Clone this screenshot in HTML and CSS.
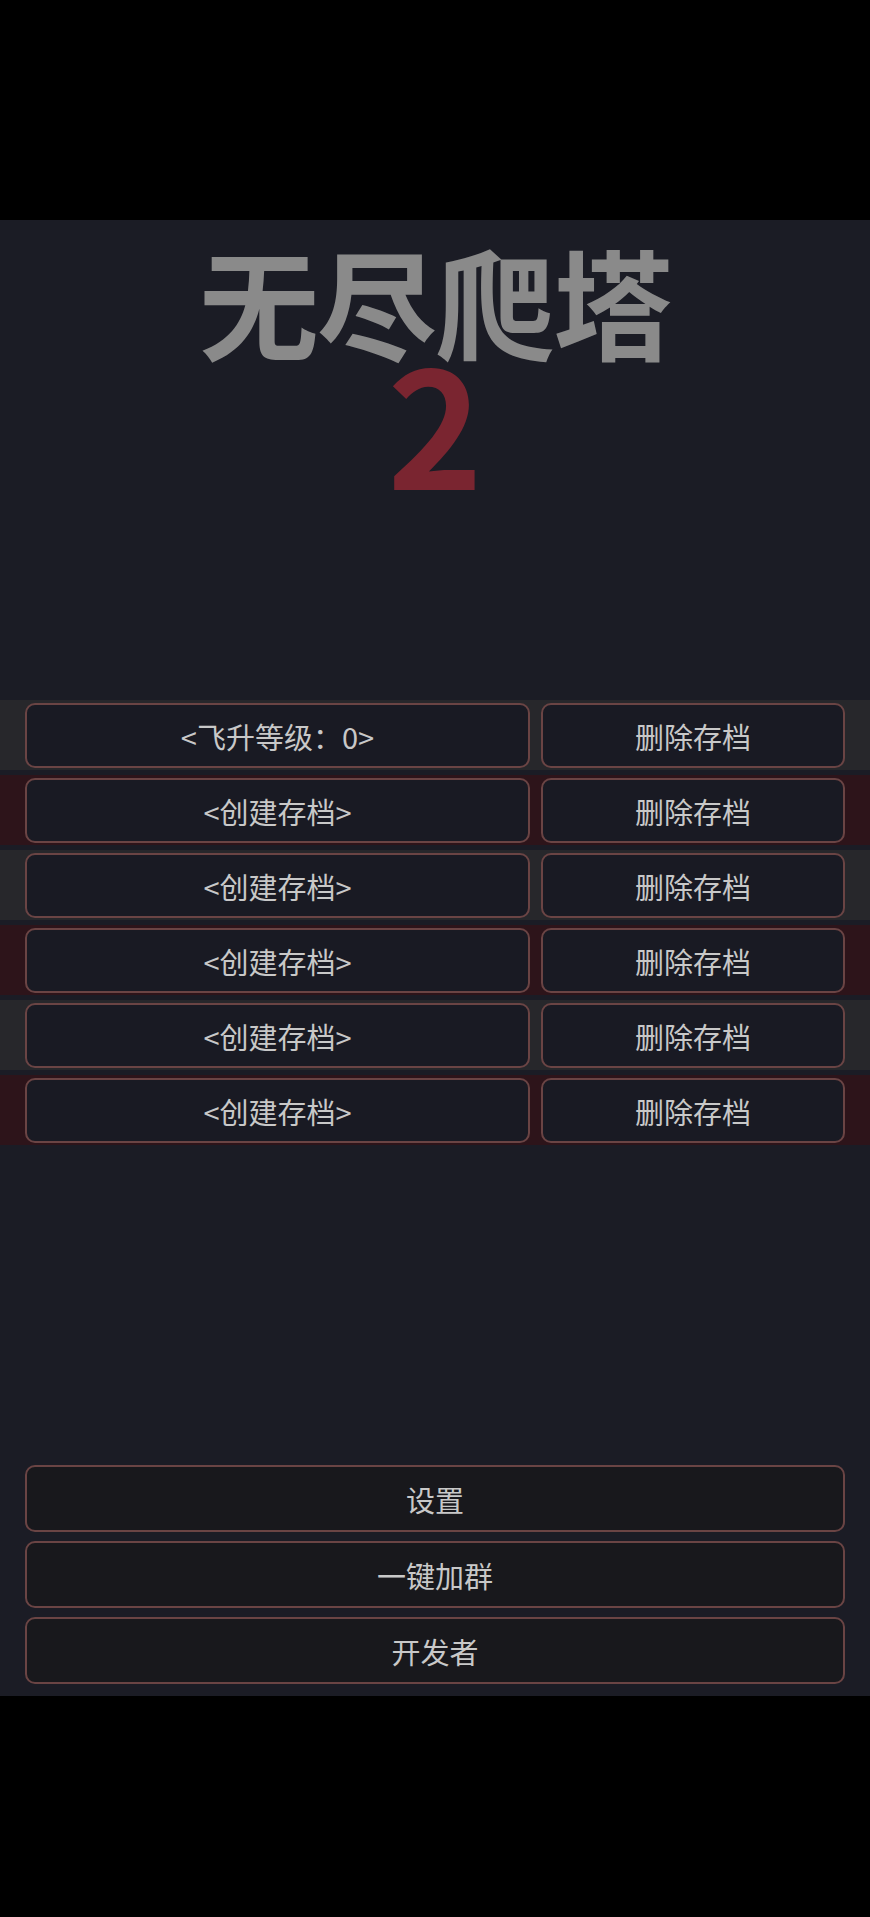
FILE: index.html
```html
<!DOCTYPE html>
<html lang="zh-CN">
<head>
<meta charset="utf-8">
<title>无尽爬塔2</title>
<link rel="stylesheet" href="styles.css">
</head>
<body>
<div class="screen">
  <div class="top-bar"></div>
  <main class="app">
    <header class="title">
      <div class="title-main">无尽爬塔</div>
      <div class="title-num">2</div>
    </header>
    <section class="rows">
      <div class="row gray"><div class="btn slot">&lt;飞升等级：0&gt;</div><div class="btn del">删除存档</div></div>
      <div class="row red"><div class="btn slot">&lt;创建存档&gt;</div><div class="btn del">删除存档</div></div>
      <div class="row gray"><div class="btn slot">&lt;创建存档&gt;</div><div class="btn del">删除存档</div></div>
      <div class="row red"><div class="btn slot">&lt;创建存档&gt;</div><div class="btn del">删除存档</div></div>
      <div class="row gray"><div class="btn slot">&lt;创建存档&gt;</div><div class="btn del">删除存档</div></div>
      <div class="row red"><div class="btn slot">&lt;创建存档&gt;</div><div class="btn del">删除存档</div></div>
    </section>
    <nav class="menu">
      <div class="btn menu-btn">设置</div>
      <div class="btn menu-btn">一键加群</div>
      <div class="btn menu-btn">开发者</div>
    </nav>
  </main>
  <div class="bottom-bar"></div>
</div>
</body>
</html>
```
FILE: styles.css
```css
html, body {
  margin: 0;
  padding: 0;
  background: #000;
}
body {
  font-family: "Noto Sans CJK SC", "Noto Sans", sans-serif;
}
.screen {
  width: 870px;
  height: 1917px;
  display: flex;
  flex-direction: column;
}
.top-bar {
  height: 220px;
  flex: none;
  background: #000;
}
.app {
  height: 1476px;
  flex: none;
  background: #1b1c25;
  display: flex;
  flex-direction: column;
}
.bottom-bar {
  flex: 1;
  background: #000;
}
.title {
  text-align: center;
  margin-top: 25px;
  font-weight: 700;
}
.title-main {
  font-size: 120px;
  line-height: 110px;
  color: #8a8a8a;
  letter-spacing: -2px;
}
.title-num {
  font-size: 162px;
  line-height: 130px;
  color: #7a2530;
}
.rows {
  margin-top: 215px;
  display: flex;
  flex-direction: column;
  gap: 5px;
}
.row {
  height: 70px;
  box-sizing: border-box;
  padding: 3px 25px 2px;
  display: flex;
  gap: 11px;
}
.row.gray { background: #27272b; }
.row.red { background: #2d141a; }
.btn {
  box-sizing: border-box;
  border: 2px solid #6a4444;
  border-radius: 10px;
  background: #191a23;
  color: #c8c8c8;
  font-size: 29px;
  display: flex;
  align-items: center;
  justify-content: center;
}
.slot { width: 505px; }
.del { width: 304px; }
.menu {
  margin-top: auto;
  padding: 0 25px 12px;
  display: flex;
  flex-direction: column;
  gap: 9px;
}
.menu-btn {
  height: 67px;
  background: #18181c;
}
```
